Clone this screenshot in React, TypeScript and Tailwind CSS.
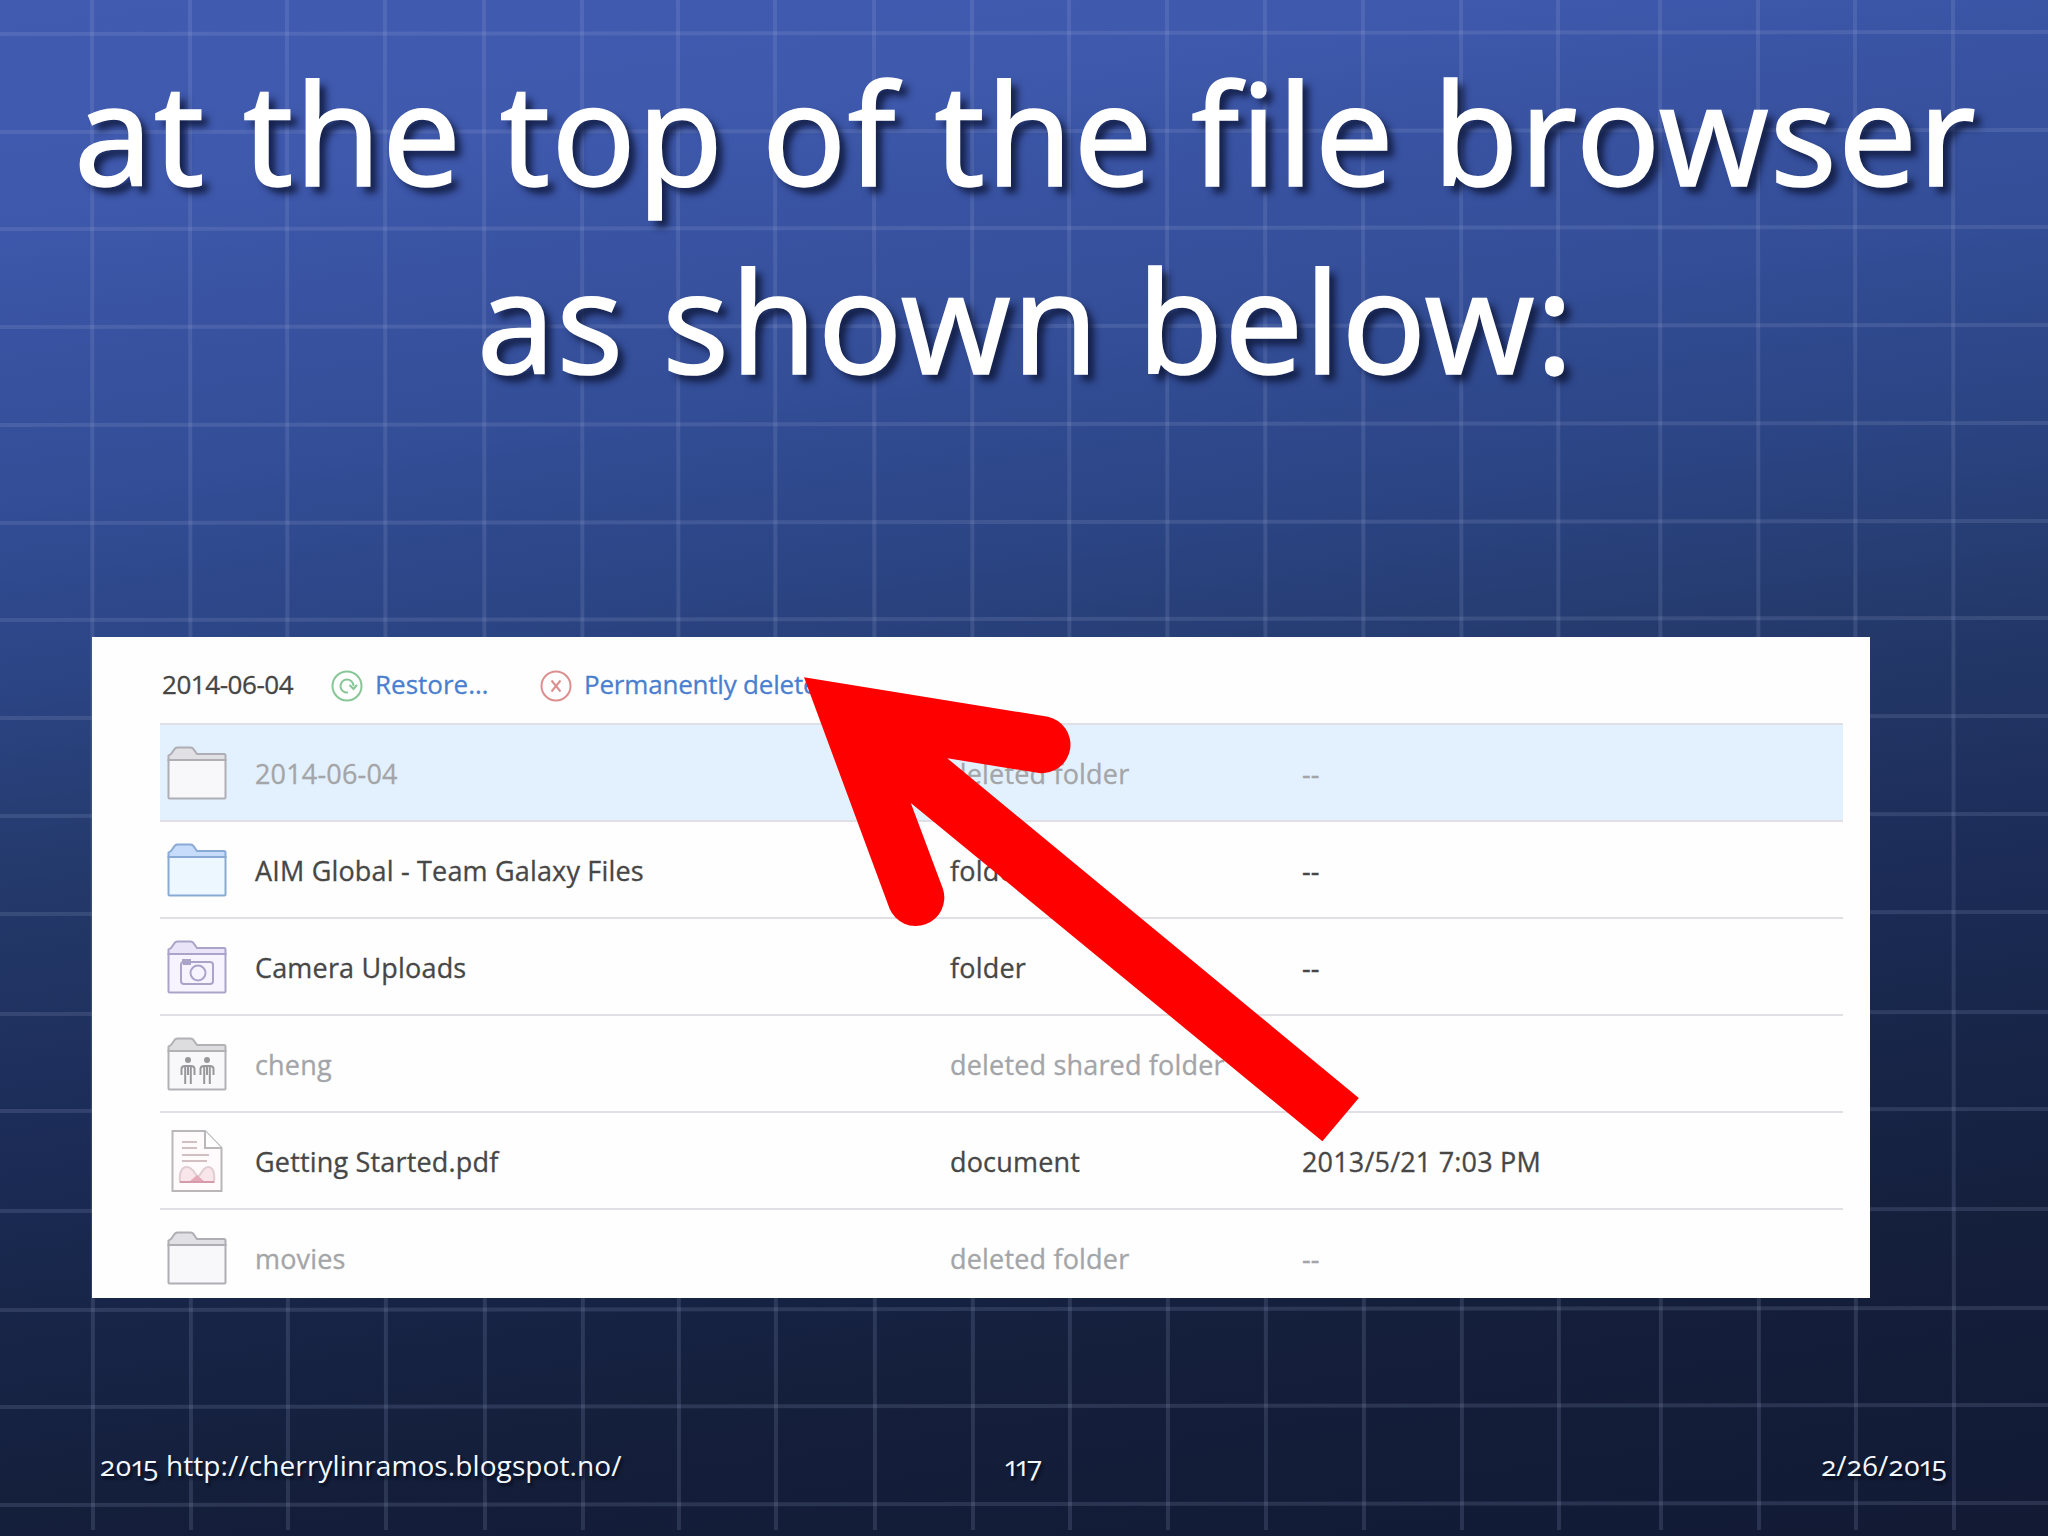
import type { ReactNode } from 'react';

type IconKind = 'folder' | 'blueFolder' | 'camera' | 'shared' | 'pdf';

interface FileRow {
  name: string;
  kind: string;
  modified: string;
  icon: IconKind;
  deleted?: boolean;
  selected?: boolean;
}

const files: FileRow[] = [
  { name: '2014-06-04', kind: 'deleted folder', modified: '--', icon: 'folder', deleted: true, selected: true },
  { name: 'AIM Global - Team Galaxy Files', kind: 'folder', modified: '--', icon: 'blueFolder' },
  { name: 'Camera Uploads', kind: 'folder', modified: '--', icon: 'camera' },
  { name: 'cheng', kind: 'deleted shared folder', modified: '', icon: 'shared', deleted: true },
  { name: 'Getting Started.pdf', kind: 'document', modified: '2013/5/21 7:03 PM', icon: 'pdf' },
  { name: 'movies', kind: 'deleted folder', modified: '--', icon: 'folder', deleted: true },
];

const columns = [92, 190, 287, 385, 484, 582, 678, 775, 874, 972, 1069, 1167, 1265, 1363, 1461, 1558, 1660, 1758, 1855, 1953];
const rows = [34, 132, 229, 327, 425, 523, 620, 718, 816, 914, 1014, 1111, 1211, 1310, 1407, 1505];

function Grid() {
  return (
    <svg className="absolute inset-0" width="2048" height="1536" stroke="#a9b3d8" strokeOpacity="0.16" strokeWidth="4">
      {columns.map((x) => (
        <line key={x} x1={x} y1="0" x2={x + 1} y2="1530" />
      ))}
      {rows.map((y) => (
        <line key={y} x1="0" y1={y} x2="2048" y2={y - 2} />
      ))}
    </svg>
  );
}

function Folder({ stroke, tab, fill, children }: { stroke: string; tab: string; fill: string; children?: ReactNode }) {
  return (
    <svg width="60" height="54" viewBox="0 0 60 54" fill="none" stroke={stroke} strokeWidth="2">
      <path d="M1.5 14V9.5L4 8L8 2.5Q9 1.5 11 1.5H23Q25 1.5 26 2.5L30 8H57Q58.5 8 58.5 9.5V14Z" fill={tab} />
      <path d="M1.5 14H58.5V51.5Q58.5 52.5 57.5 52.5H2.5Q1.5 52.5 1.5 51.5Z" fill={fill} />
      {children}
    </svg>
  );
}

function Person({ x }: { x: number }) {
  return (
    <g transform={`translate(${x} 0)`} stroke="#98989c">
      <circle cx="0" cy="23" r="3" fill="#98989c" stroke="none" />
      <path d="M-6.5 38V31.5Q-6 29 -3 29H3Q6 29 6.5 31.5V38M-2.8 30V47M2.8 30V47M0 29V38" />
    </g>
  );
}

function FileIcon({ kind }: { kind: IconKind }) {
  switch (kind) {
    case 'blueFolder':
      return <Folder stroke="#8aaad6" tab="#c6dcfa" fill="#ecf7ff" />;
    case 'camera':
      return (
        <Folder stroke="#aaa4c8" tab="#e9e4f8" fill="#f7f4ff">
          <path d="M14 25Q14 22 17 22H43Q46 22 46 25V41Q46 44 43 44H17Q14 44 14 41ZM16 22V20H23V24H16" />
          <circle cx="31" cy="33" r="7.5" />
        </Folder>
      );
    case 'shared':
      return (
        <Folder stroke="#b2b2b6" tab="#dddde0" fill="#f8f8fa">
          <Person x={21} />
          <Person x={40} />
        </Folder>
      );
    case 'pdf':
      return (
        <svg width="60" height="64" viewBox="0 0 60 64" fill="none" stroke="#b9b7ba" strokeWidth="2">
          <path d="M5.5 2H38L54.5 19V62H5.5Z" fill="#fffafb" />
          <path d="M38 2V19H54.5" fill="#fff" />
          <path d="M15 13H30M15 19H30M15 26H42M15 32H40" stroke="#d2bfc2" />
          <path
            d="M13 53C12 43 15 38 20 38C26 38 28 46 31 48C34 46 36 38 41 38C46 38 48 44 47 53Z"
            fill="#f9e6ea"
            stroke="#dfcdd3"
          />
          <path d="M22 53L30 46L38 53Z" fill="#e5a9b8" stroke="none" />
          <path d="M13 53H47" stroke="#d59aab" />
        </svg>
      );
    default:
      return <Folder stroke="#aeaeb4" tab="#e0e0e5" fill="#f8f8fa" />;
  }
}

function Toolbar() {
  return (
    <div className="flex h-[86px] shrink-0 items-center pt-[9px] pl-[70px] text-[26px] [-webkit-text-stroke:0.3px]">
      <span className="w-[169px] tracking-[-0.45px] text-[#454545]">2014-06-04</span>
      <svg className="mt-[3px]" width="32" height="32" viewBox="0 0 32 32" fill="none" stroke="#87c697" strokeWidth="2">
        <circle cx="16" cy="16" r="14.5" />
        <path d="M17 22.5A6.5 6.5 0 1 1 22.5 16M18.5 15L22.5 19L26 15" />
      </svg>
      <span className="ml-3 w-[165px] text-[#4a7fd0]">Restore…</span>
      <svg className="mt-[3px]" width="32" height="32" viewBox="0 0 32 32" fill="none" stroke="#dc8f8f" strokeWidth="2">
        <circle cx="16" cy="16" r="14.5" />
        <path d="M11.5 10.5L20.5 21.5M20.5 10.5L11.5 21.5" />
      </svg>
      <span className="ml-3 whitespace-nowrap tracking-[-0.2px] text-[#4a7fd0]">Permanently delete</span>
    </div>
  );
}

function Row({ file }: { file: FileRow }) {
  const color = file.deleted ? 'text-[#a3a5a8]' : 'text-[#474747]';
  return (
    <div
      className={`ml-[68px] flex h-[97px] w-[1683px] shrink-0 items-center border-t-2 border-[#e0dfe5] pt-[3px] pl-[7px] text-[27px] tracking-[0.18px] [-webkit-text-stroke:0.3px] ${color} ${
        file.selected ? 'bg-[#e3f1fe]' : ''
      }`}
    >
      <div className="w-[88px] pb-0.5">
        <FileIcon kind={file.icon} />
      </div>
      <div className="w-[695px]">{file.name}</div>
      <div className="w-[352px]">{file.kind}</div>
      <div>{file.modified}</div>
    </div>
  );
}

function Arrow() {
  return (
    <svg className="absolute top-[670px] left-[796px]" width="570" height="480" viewBox="796 670 570 480">
      <path
        d="M804 677.3L1048 716.8A28.5 28.5 0 0 1 1039 773L947.3 758.3L1358.8 1098L1322.4 1141.3L910.8 803L943 889A28.5 28.5 0 0 1 889.5 908.5Z"
        fill="#ff0000"
      />
    </svg>
  );
}

export default function App() {
  return (
    <main className="relative flex h-[1536px] w-[2048px] flex-col overflow-hidden bg-[linear-gradient(172deg,#415bb1_0%,#3f59ad_11%,#3a54a4_17%,#334d96_28%,#2b4483_38%,#233868_50%,#1d2d5a_61%,#18264a_71%,#141f3b_83%,#121a34_100%)] font-['Open_Sans','Noto_Sans',sans-serif]">
      <Grid />
      <h1 className="relative flex h-[637px] shrink-0 flex-col items-center pt-[38px] pl-[3px] font-['Noto_Sans','Open_Sans',sans-serif] text-[140px] leading-[188px] tracking-[1.1px] whitespace-nowrap text-white [-webkit-text-stroke:1.5px_white] [text-shadow:7px_7px_7px_rgba(14,24,58,0.85)]">
        <span>at the top of the file browser</span>
        <span>as shown below:</span>
      </h1>
      <section className="relative ml-[92px] flex h-[661px] w-[1778px] shrink-0 flex-col overflow-hidden bg-[#fefefe]">
        <Toolbar />
        {files.map((file) => (
          <Row key={file.name} file={file} />
        ))}
      </section>
      <footer className="relative grid h-[238px] grid-cols-3 items-center pt-[95px] pr-[101px] pl-[100px] text-[28px] tracking-[0.1px] text-[#f3f8ff] [font-feature-settings:'onum','pnum'] [text-shadow:2px_3px_3px_rgba(5,10,25,0.8)]">
        <span>2015 http://cherrylinramos.blogspot.no/</span>
        <span className="text-center">117</span>
        <span className="text-right">2/26/2015</span>
      </footer>
      <Arrow />
    </main>
  );
}
